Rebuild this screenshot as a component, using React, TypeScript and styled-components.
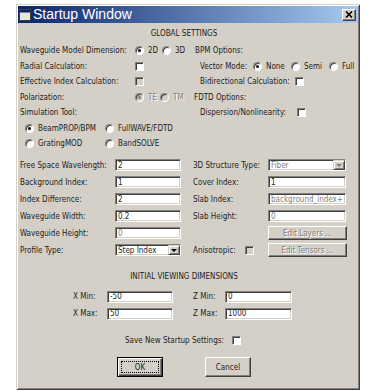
import React from "react";
import styled, { createGlobalStyle, css } from "styled-components";

const FACE = "#D4D0C8";
const SHADOW = "#808080";
const DARK = "#404040";
const INK = "#1c1c1c";

const Global = createGlobalStyle`
  html, body { margin: 0; padding: 0; background: #fff; }
  body {
    font-family: "DejaVu Sans Condensed", "Liberation Sans", sans-serif;
    font-size: 8px;
    color: ${INK};
  }
  #root { width: 375px; height: 391px; overflow: hidden; }
`;

const Window = styled.div`
  box-sizing: border-box;
  margin: 4px 0 0 16px;
  width: 344px;
  height: 386px;
  padding: 2px;
  background: ${FACE};
  box-shadow: inset 1px 1px 0 ${FACE}, inset -1px -1px 0 ${DARK},
    inset 2px 2px 0 #fff, inset -2px -2px 0 ${SHADOW};
  display: flex;
  flex-direction: column;
`;

const TitleBar = styled.div`
  height: 17px;
  flex: none;
  display: flex;
  align-items: center;
  padding: 0 2px 0 1px;
  background: linear-gradient(to right, #0a246a, #a6caf0);
`;

const TitleText = styled.span`
  flex: 1;
  margin-left: 2px;
  color: #fff;
  font-family: "Liberation Sans", Arial, sans-serif;
  font-size: 14px;
  line-height: 17px;
  white-space: nowrap;
`;

const CloseBtn = styled.div`
  box-sizing: border-box;
  width: 14px;
  height: 12px;
  background: ${FACE};
  border: 1px solid;
  border-color: #fff ${DARK} ${DARK} #fff;
  box-shadow: inset -1px -1px 0 ${SHADOW};
  display: flex;
  align-items: center;
  justify-content: center;
`;

const Body = styled.div`
  display: flex;
  flex-direction: column;
  padding-left: 2px;
`;

const Heading = styled.div<{ $top: number }>`
  height: 12px;
  line-height: 12px;
  margin-top: ${(p) => p.$top}px;
  padding-right: 10px;
  text-align: center;
  white-space: nowrap;
`;

const Section = styled.div<{ $top: number }>`
  display: flex;
  flex-direction: column;
  margin-top: ${(p) => p.$top}px;
`;

const Row = styled.div<{ $h: number; $indent?: number }>`
  display: flex;
  align-items: center;
  height: ${(p) => p.$h}px;
  padding-left: ${(p) => p.$indent ?? 0}px;
`;

const Text = styled.span<{ $w?: number; $muted?: boolean }>`
  flex: none;
  white-space: nowrap;
  ${(p) => p.$w !== undefined && css`width: ${p.$w}px;`}
  color: ${(p) => (p.$muted ? SHADOW : INK)};
  ${(p) => p.$muted && css`text-shadow: 1px 1px 0 #fff;`}
`;

const Cell = styled.div<{ $w: number }>`
  flex: none;
  width: ${(p) => p.$w}px;
  display: flex;
  align-items: center;
`;

const Option = styled.label<{ $w?: number }>`
  flex: none;
  display: flex;
  align-items: center;
  gap: 4px;
  ${(p) => p.$w !== undefined && css`width: ${p.$w}px;`}
`;

const RadioDot = styled.span<{ $on?: boolean; $disabled?: boolean }>`
  box-sizing: border-box;
  flex: none;
  width: 9px;
  height: 9px;
  border-radius: 50%;
  background: ${(p) => (p.$disabled ? FACE : "#fff")};
  border: 1px solid;
  border-color: ${SHADOW} #fff #fff ${SHADOW};
  box-shadow: inset 1px 1px 0 ${DARK};
  display: flex;
  align-items: center;
  justify-content: center;
  &::after {
    content: "";
    display: ${(p) => (p.$on ? "block" : "none")};
    width: 3px;
    height: 3px;
    border-radius: 50%;
    background: ${(p) => (p.$disabled ? SHADOW : "#000")};
  }
`;

const CheckBox = styled.span<{ $disabled?: boolean }>`
  box-sizing: border-box;
  flex: none;
  width: 9px;
  height: 9px;
  background: ${(p) => (p.$disabled ? FACE : "#fff")};
  border: 1px solid;
  border-color: ${SHADOW} #fff #fff ${SHADOW};
  box-shadow: inset 1px 1px 0 ${DARK};
`;

const Field = styled.div<{ $w: number; $disabled?: boolean }>`
  box-sizing: border-box;
  flex: none;
  width: ${(p) => p.$w}px;
  height: 12px;
  background: #fff;
  border: 1px solid;
  border-color: ${SHADOW} #fff #fff ${SHADOW};
  box-shadow: inset 1px 1px 0 ${DARK}, inset -1px -1px 0 ${FACE};
  padding-left: 2px;
  display: flex;
  align-items: center;
  overflow: hidden;
  white-space: nowrap;
  color: ${(p) => (p.$disabled ? SHADOW : INK)};
`;

const FieldValue = styled.span`
  flex: 1;
  overflow: hidden;
`;

const DropBtn = styled.span`
  box-sizing: border-box;
  flex: none;
  width: 12px;
  height: 10px;
  background: ${FACE};
  border: 1px solid;
  border-color: ${FACE} ${DARK} ${DARK} ${FACE};
  box-shadow: inset 1px 1px 0 #fff, inset -1px -1px 0 ${SHADOW};
  display: flex;
  align-items: center;
  justify-content: center;
`;

const Arrow = styled.span<{ $disabled?: boolean }>`
  width: 0;
  height: 0;
  border-left: 3px solid transparent;
  border-right: 3px solid transparent;
  border-top: 3px solid ${(p) => (p.$disabled ? SHADOW : "#000")};
`;

const Button = styled.div<{ $w: number; $h: number; $disabled?: boolean; $default?: boolean }>`
  box-sizing: border-box;
  flex: none;
  width: ${(p) => p.$w}px;
  height: ${(p) => p.$h}px;
  background: ${FACE};
  display: flex;
  align-items: center;
  justify-content: center;
  white-space: nowrap;
  color: ${(p) => (p.$disabled ? SHADOW : INK)};
  ${(p) => p.$disabled && css`text-shadow: 1px 1px 0 #fff;`}
  ${(p) =>
    p.$default
      ? css`
          border: 1px solid #000;
          box-shadow: inset 1px 1px 0 #fff, inset -1px -1px 0 ${DARK},
            inset -2px -2px 0 ${SHADOW};
          padding: 3px;
        `
      : css`
          border: 1px solid;
          border-color: #fff ${DARK} ${DARK} #fff;
          box-shadow: inset -1px -1px 0 ${SHADOW};
        `}
`;

const FocusRing = styled.span`
  box-sizing: border-box;
  flex: 1;
  align-self: stretch;
  border: 1px dotted #000;
  display: flex;
  align-items: center;
  justify-content: center;
`;

const Gap = styled.span<{ $w: number }>`
  flex: none;
  width: ${(p) => p.$w}px;
`;

function Radio({ label, on, disabled, w }: { label: string; on?: boolean; disabled?: boolean; w?: number }) {
  return (
    <Option $w={w}>
      <RadioDot $on={on} $disabled={disabled} />
      <Text $muted={disabled}>{label}</Text>
    </Option>
  );
}

function Select({ w, value, disabled }: { w: number; value: string; disabled?: boolean }) {
  return (
    <Field $w={w} $disabled={disabled}>
      <FieldValue>{value}</FieldValue>
      <DropBtn>
        <Arrow $disabled={disabled} />
      </DropBtn>
    </Field>
  );
}

function WinIcon() {
  return (
    <svg width="12" height="12" viewBox="0 0 12 12">
      <rect x="0.5" y="0.5" width="11" height="11" fill="#e8e6e0" stroke="#404040" />
      <rect x="1" y="1" width="10" height="2.5" fill="#0a246a" />
    </svg>
  );
}

function CloseGlyph() {
  return (
    <svg width="8" height="7" viewBox="0 0 8 7">
      <path d="M1 0.5 L7 6.5 M7 0.5 L1 6.5" stroke="#000" strokeWidth="1.6" />
    </svg>
  );
}

export default function App() {
  return (
    <>
      <Global />
      <Window>
        <TitleBar>
          <WinIcon />
          <TitleText>Startup Window</TitleText>
          <CloseBtn>
            <CloseGlyph />
          </CloseBtn>
        </TitleBar>
        <Body>
          <Heading $top={5}>GLOBAL SETTINGS</Heading>
          <Section $top={3}>
            <Row $h={15.5}>
              <Text $w={115}>Waveguide Model Dimension:</Text>
              <Radio w={27} label="2D" on />
              <Radio w={33} label="3D" />
              <Text>BPM Options:</Text>
            </Row>
            <Row $h={15.5}>
              <Text $w={115}>Radial Calculation:</Text>
              <Cell $w={65}>
                <CheckBox />
              </Cell>
              <Text $w={53}>Vector Mode:</Text>
              <Radio w={38} label="None" on />
              <Radio w={38} label="Semi" />
              <Radio label="Full" />
            </Row>
            <Row $h={15.5}>
              <Text $w={115}>Effective Index Calculation:</Text>
              <Cell $w={65}>
                <CheckBox $disabled />
              </Cell>
              <Text $w={95}>Bidirectional Calculation:</Text>
              <CheckBox />
            </Row>
            <Row $h={15.5}>
              <Text $w={115}>Polarization:</Text>
              <Radio w={25} label="TE" on disabled />
              <Radio w={34} label="TM" disabled />
              <Text>FDTD Options:</Text>
            </Row>
            <Row $h={15.5}>
              <Text $w={180}>Simulation Tool:</Text>
              <Text $w={97}>Dispersion/Nonlinearity:</Text>
              <CheckBox />
            </Row>
            <Row $h={15.5} $indent={5}>
              <Radio w={80} label="BeamPROP/BPM" on />
              <Radio label="FullWAVE/FDTD" />
            </Row>
            <Row $h={15.5} $indent={5}>
              <Radio w={80} label="GratingMOD" />
              <Radio label="BandSOLVE" />
            </Row>
          </Section>

          <Section $top={5}>
            <Row $h={17}>
              <Text $w={95}>Free Space Wavelength:</Text>
              <Field $w={66}>2</Field>
              <Gap $w={12} />
              <Text $w={75}>3D Structure Type:</Text>
              <Select w={78} value="Fiber" disabled />
            </Row>
            <Row $h={17}>
              <Text $w={95}>Background Index:</Text>
              <Field $w={66}>1</Field>
              <Gap $w={12} />
              <Text $w={75}>Cover Index:</Text>
              <Field $w={78}>1</Field>
            </Row>
            <Row $h={17}>
              <Text $w={95}>Index Difference:</Text>
              <Field $w={66}>2</Field>
              <Gap $w={12} />
              <Text $w={75}>Slab Index:</Text>
              <Field $w={78} $disabled>
                background_index+
              </Field>
            </Row>
            <Row $h={17}>
              <Text $w={95}>Waveguide Width:</Text>
              <Field $w={66}>0.2</Field>
              <Gap $w={12} />
              <Text $w={75}>Slab Height:</Text>
              <Field $w={78} $disabled>
                0
              </Field>
            </Row>
            <Row $h={17}>
              <Text $w={95}>Waveguide Height:</Text>
              <Field $w={66} $disabled>
                0
              </Field>
              <Gap $w={87} />
              <Button $w={79} $h={14} $disabled>
                Edit Layers ...
              </Button>
            </Row>
            <Row $h={17}>
              <Text $w={95}>Profile Type:</Text>
              <Select w={66} value="Step Index" />
              <Gap $w={12} />
              <Text $w={52}>Anisotropic:</Text>
              <CheckBox $disabled />
              <Gap $w={14} />
              <Button $w={79} $h={14} $disabled>
                Edit Tensors ...
              </Button>
            </Row>
          </Section>

          <Heading $top={12.5}>INITIAL VIEWING DIMENSIONS</Heading>
          <Section $top={5}>
            <Row $h={17} $indent={53}>
              <Text $w={34}>X Min:</Text>
              <Field $w={66}>-50</Field>
              <Gap $w={20} />
              <Text $w={32}>Z Min:</Text>
              <Field $w={67}>0</Field>
            </Row>
            <Row $h={17} $indent={53}>
              <Text $w={34}>X Max:</Text>
              <Field $w={66}>50</Field>
              <Gap $w={20} />
              <Text $w={32}>Z Max:</Text>
              <Field $w={67}>1000</Field>
            </Row>
          </Section>

          <Section $top={12}>
            <Row $h={12} $indent={105}>
              <Text $w={107}>Save New Startup Settings:</Text>
              <CheckBox />
            </Row>
          </Section>

          <Section $top={11}>
            <Row $h={20} $indent={97}>
              <Button $w={46} $h={20} $default>
                <FocusRing>OK</FocusRing>
              </Button>
              <Gap $w={42} />
              <Button $w={46} $h={20}>
                Cancel
              </Button>
            </Row>
          </Section>
        </Body>
      </Window>
    </>
  );
}
